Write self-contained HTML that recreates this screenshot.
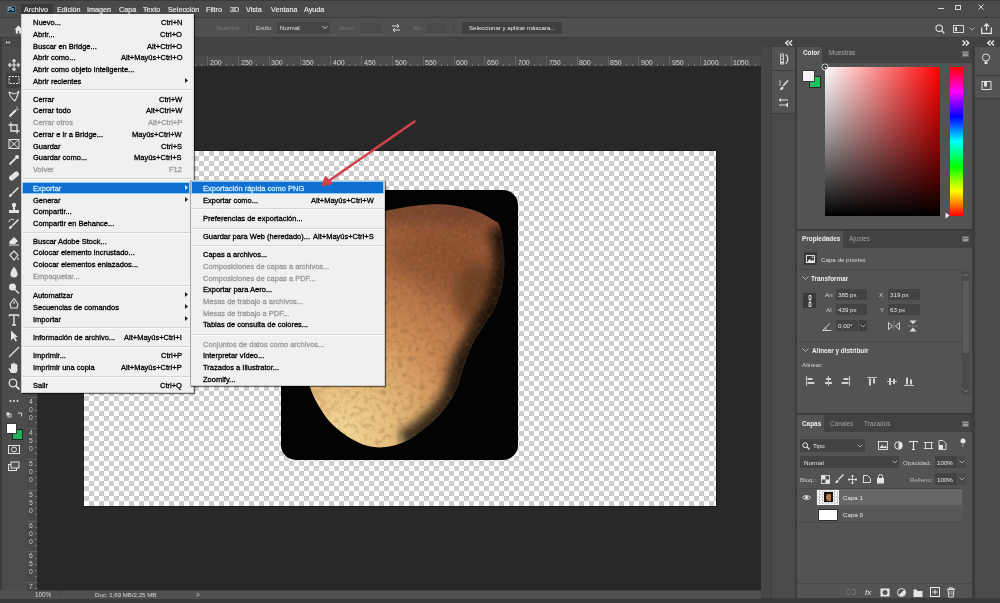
<!DOCTYPE html>
<html><head><meta charset="utf-8"><style>
html,body{margin:0;padding:0;}
body{width:1000px;height:603px;position:relative;overflow:hidden;background:#282828;font-family:"Liberation Sans", sans-serif;}
body>div,body>svg{position:absolute;}
.t{white-space:nowrap;will-change:transform;}
</style></head><body>
<div style="left:0px;top:0px;width:1000px;height:603px;background:#535353;"></div>
<div style="left:38px;top:67px;width:723px;height:523px;background:#282828;"></div>
<div style="left:0px;top:0px;width:1000px;height:1px;background:#3a3a3a;"></div>
<div style="left:0px;top:1px;width:1000px;height:16px;background:#4a4a4a;"></div>
<div style="left:0px;top:17px;width:1000px;height:1px;background:#3d3d3d;"></div>
<div style="left:0px;top:18px;width:1000px;height:19px;background:#4f4f4f;"></div>
<div style="left:0px;top:34px;width:1000px;height:1px;background:#565656;"></div>
<div style="left:0px;top:36.5px;width:1000px;height:1.5px;background:#3e3e3e;"></div>
<div style="left:0px;top:38px;width:761px;height:18px;background:#424242;"></div>
<div style="left:761px;top:38px;width:239px;height:9px;background:#424242;"></div>
<div style="left:7px;top:5.5px;width:8.5px;height:7.8px;background:#0a1d2c;border:0.6px solid #4a6a80;box-sizing:border-box;"></div>
<div class="t" style="left:8.3px;top:6.86px;font-size:5.6px;line-height:5.6px;color:#a8dcf8;font-weight:bold;letter-spacing:-0.4px;">Ps</div>
<div style="left:21px;top:4px;width:32px;height:11px;background:#3a3a3a;"></div>
<div class="t" style="left:24px;top:5.91px;font-size:7.2px;line-height:7.2px;color:#ececec;-webkit-text-stroke:0.15px #ececec;">Archivo</div>
<div class="t" style="left:56.5px;top:5.91px;font-size:7.2px;line-height:7.2px;color:#ececec;-webkit-text-stroke:0.15px #ececec;">Edición</div>
<div class="t" style="left:87px;top:5.91px;font-size:7.2px;line-height:7.2px;color:#ececec;-webkit-text-stroke:0.15px #ececec;">Imagen</div>
<div class="t" style="left:119px;top:5.91px;font-size:7.2px;line-height:7.2px;color:#ececec;-webkit-text-stroke:0.15px #ececec;">Capa</div>
<div class="t" style="left:143px;top:5.91px;font-size:7.2px;line-height:7.2px;color:#ececec;-webkit-text-stroke:0.15px #ececec;">Texto</div>
<div class="t" style="left:168px;top:5.91px;font-size:7.2px;line-height:7.2px;color:#ececec;-webkit-text-stroke:0.15px #ececec;">Selección</div>
<div class="t" style="left:206px;top:5.91px;font-size:7.2px;line-height:7.2px;color:#ececec;-webkit-text-stroke:0.15px #ececec;">Filtro</div>
<div class="t" style="left:229.5px;top:5.91px;font-size:7.2px;line-height:7.2px;color:#ececec;-webkit-text-stroke:0.15px #ececec;">3D</div>
<div class="t" style="left:246px;top:5.91px;font-size:7.2px;line-height:7.2px;color:#ececec;-webkit-text-stroke:0.15px #ececec;">Vista</div>
<div class="t" style="left:270.5px;top:5.91px;font-size:7.2px;line-height:7.2px;color:#ececec;-webkit-text-stroke:0.15px #ececec;">Ventana</div>
<div class="t" style="left:304px;top:5.91px;font-size:7.2px;line-height:7.2px;color:#ececec;-webkit-text-stroke:0.15px #ececec;">Ayuda</div>
<div style="left:937.5px;top:8px;width:6.5px;height:1px;background:#d8d8d8;"></div>
<div style="left:955px;top:4.5px;width:6px;height:5.5px;border:1px solid #d8d8d8;border-top-width:1.6px;box-sizing:border-box;"></div>
<svg style="left:978px;top:4px;width:6px;height:6px" viewBox="0 0 6 6"><path d="M0.5 0.5L5.5 5.5M5.5 0.5L0.5 5.5" stroke="#d8d8d8" stroke-width="1"/></svg>
<svg style="left:13.5px;top:24.5px;width:9px;height:9px" viewBox="0 0 10 10"><path d="M5 0.5L0.5 5H2v4.5h2.3V6.5h1.4v3H8V5h1.5z" fill="#e8e8e8"/></svg>
<div style="left:29px;top:21px;width:1px;height:13px;background:#3a3a3a;"></div>
<div class="t" style="left:216px;top:25.14px;font-size:6.1px;line-height:6.1px;color:#7a7a7a;">Suavizar</div>
<div style="left:248px;top:21px;width:1px;height:13px;background:#474747;"></div>
<div class="t" style="left:256px;top:25.14px;font-size:6.1px;line-height:6.1px;color:#cfcfcf;">Estilo:</div>
<div style="left:277px;top:22px;width:53px;height:12px;background:#454545;"></div>
<div class="t" style="left:280px;top:25.14px;font-size:6.1px;line-height:6.1px;color:#e6e6e6;">Normal</div>
<svg style="left:322px;top:25px;width:6px;height:5px" viewBox="0 0 6 5"><path d="M0.5 1L3 3.5L5.5 1" stroke="#cfcfcf" fill="none" stroke-width="1"/></svg>
<div class="t" style="left:339px;top:25.14px;font-size:6.1px;line-height:6.1px;color:#7a7a7a;">Anch.:</div>
<div style="left:360px;top:23px;width:21px;height:10px;background:#4a4a4a;"></div>
<svg style="left:391px;top:23px;width:10px;height:10px" viewBox="0 0 10 10"><path d="M1 3h7M6 1l2 2-2 2M9 7H2M4 5L2 7l2 2" stroke="#d8d8d8" fill="none" stroke-width="1"/></svg>
<div class="t" style="left:413px;top:25.14px;font-size:6.1px;line-height:6.1px;color:#7a7a7a;">Alt.:</div>
<div style="left:427px;top:23px;width:20px;height:10px;background:#4a4a4a;"></div>
<div style="left:453px;top:21px;width:1px;height:13px;background:#474747;"></div>
<div style="left:462px;top:22px;width:100px;height:12px;background:#3f3f3f;border-radius:1px;"></div>
<div class="t" style="left:469px;top:25.14px;font-size:6.1px;line-height:6.1px;color:#ebebeb;">Seleccionar y aplicar máscara...</div>
<svg style="left:935px;top:23.5px;width:10px;height:10px" viewBox="0 0 10 10"><circle cx="4.2" cy="4.2" r="3.2" stroke="#e0e0e0" fill="none" stroke-width="1.1"/><path d="M6.5 6.5L9.3 9.3" stroke="#e0e0e0" stroke-width="1.3"/></svg>
<div style="left:953px;top:25px;width:11px;height:8px;border:1px solid #d8d8d8;box-sizing:border-box;"></div>
<div style="left:955px;top:27px;width:2px;height:4px;background:#d8d8d8;"></div>
<svg style="left:969px;top:26.5px;width:6px;height:4px" viewBox="0 0 6 4"><path d="M0.5 0.5L3 3L5.5 0.5" stroke="#a8a8a8" fill="none"/></svg>
<svg style="left:981px;top:23px;width:11px;height:11px" viewBox="0 0 11 11"><path d="M0.7 4.5v5.8h9.6V4.5M5.5 7.5V1M3 3.3L5.5 0.8L8 3.3" stroke="#e8e8e8" fill="none" stroke-width="1.2"/></svg>
<div style="left:27px;top:56px;width:734px;height:11px;background:#4a4a4a;"></div>
<div style="left:27px;top:66px;width:734px;height:1px;background:#2e2e2e;"></div>
<div class="t" style="left:55.7px;top:59.07px;font-size:7.0px;line-height:7.0px;color:#d6d6d6;">-50</div>
<div class="t" style="left:86.5px;top:59.07px;font-size:7.0px;line-height:7.0px;color:#d6d6d6;">0</div>
<div class="t" style="left:117.3px;top:59.07px;font-size:7.0px;line-height:7.0px;color:#d6d6d6;">50</div>
<div class="t" style="left:148.1px;top:59.07px;font-size:7.0px;line-height:7.0px;color:#d6d6d6;">100</div>
<div class="t" style="left:178.9px;top:59.07px;font-size:7.0px;line-height:7.0px;color:#d6d6d6;">150</div>
<div class="t" style="left:209.7px;top:59.07px;font-size:7.0px;line-height:7.0px;color:#d6d6d6;">200</div>
<div class="t" style="left:240.5px;top:59.07px;font-size:7.0px;line-height:7.0px;color:#d6d6d6;">250</div>
<div class="t" style="left:271.3px;top:59.07px;font-size:7.0px;line-height:7.0px;color:#d6d6d6;">300</div>
<div class="t" style="left:302.1px;top:59.07px;font-size:7.0px;line-height:7.0px;color:#d6d6d6;">350</div>
<div class="t" style="left:332.9px;top:59.07px;font-size:7.0px;line-height:7.0px;color:#d6d6d6;">400</div>
<div class="t" style="left:363.7px;top:59.07px;font-size:7.0px;line-height:7.0px;color:#d6d6d6;">450</div>
<div class="t" style="left:394.5px;top:59.07px;font-size:7.0px;line-height:7.0px;color:#d6d6d6;">500</div>
<div class="t" style="left:425.3px;top:59.07px;font-size:7.0px;line-height:7.0px;color:#d6d6d6;">550</div>
<div class="t" style="left:456.1px;top:59.07px;font-size:7.0px;line-height:7.0px;color:#d6d6d6;">600</div>
<div class="t" style="left:486.9px;top:59.07px;font-size:7.0px;line-height:7.0px;color:#d6d6d6;">650</div>
<div class="t" style="left:517.7px;top:59.07px;font-size:7.0px;line-height:7.0px;color:#d6d6d6;">700</div>
<div class="t" style="left:548.5px;top:59.07px;font-size:7.0px;line-height:7.0px;color:#d6d6d6;">750</div>
<div class="t" style="left:579.3px;top:59.07px;font-size:7.0px;line-height:7.0px;color:#d6d6d6;">800</div>
<div class="t" style="left:610.1px;top:59.07px;font-size:7.0px;line-height:7.0px;color:#d6d6d6;">850</div>
<div class="t" style="left:640.9px;top:59.07px;font-size:7.0px;line-height:7.0px;color:#d6d6d6;">900</div>
<div class="t" style="left:671.7px;top:59.07px;font-size:7.0px;line-height:7.0px;color:#d6d6d6;">950</div>
<div class="t" style="left:702.5px;top:59.07px;font-size:7.0px;line-height:7.0px;color:#d6d6d6;">1000</div>
<div class="t" style="left:733.3px;top:59.07px;font-size:7.0px;line-height:7.0px;color:#d6d6d6;">1050</div>
<div style="left:53.20px;top:56px;width:1px;height:10px;background:#626262"></div>
<div style="left:59.36px;top:64px;width:1px;height:2px;background:#7a7a7a"></div>
<div style="left:65.52px;top:64px;width:1px;height:2px;background:#7a7a7a"></div>
<div style="left:71.68px;top:64px;width:1px;height:2px;background:#7a7a7a"></div>
<div style="left:77.84px;top:64px;width:1px;height:2px;background:#7a7a7a"></div>
<div style="left:84.00px;top:56px;width:1px;height:10px;background:#626262"></div>
<div style="left:90.16px;top:64px;width:1px;height:2px;background:#7a7a7a"></div>
<div style="left:96.32px;top:64px;width:1px;height:2px;background:#7a7a7a"></div>
<div style="left:102.48px;top:64px;width:1px;height:2px;background:#7a7a7a"></div>
<div style="left:108.64px;top:64px;width:1px;height:2px;background:#7a7a7a"></div>
<div style="left:114.80px;top:56px;width:1px;height:10px;background:#626262"></div>
<div style="left:120.96px;top:64px;width:1px;height:2px;background:#7a7a7a"></div>
<div style="left:127.12px;top:64px;width:1px;height:2px;background:#7a7a7a"></div>
<div style="left:133.28px;top:64px;width:1px;height:2px;background:#7a7a7a"></div>
<div style="left:139.44px;top:64px;width:1px;height:2px;background:#7a7a7a"></div>
<div style="left:145.60px;top:56px;width:1px;height:10px;background:#626262"></div>
<div style="left:151.76px;top:64px;width:1px;height:2px;background:#7a7a7a"></div>
<div style="left:157.92px;top:64px;width:1px;height:2px;background:#7a7a7a"></div>
<div style="left:164.08px;top:64px;width:1px;height:2px;background:#7a7a7a"></div>
<div style="left:170.24px;top:64px;width:1px;height:2px;background:#7a7a7a"></div>
<div style="left:176.40px;top:56px;width:1px;height:10px;background:#626262"></div>
<div style="left:182.56px;top:64px;width:1px;height:2px;background:#7a7a7a"></div>
<div style="left:188.72px;top:64px;width:1px;height:2px;background:#7a7a7a"></div>
<div style="left:194.88px;top:64px;width:1px;height:2px;background:#7a7a7a"></div>
<div style="left:201.04px;top:64px;width:1px;height:2px;background:#7a7a7a"></div>
<div style="left:207.20px;top:56px;width:1px;height:10px;background:#626262"></div>
<div style="left:213.36px;top:64px;width:1px;height:2px;background:#7a7a7a"></div>
<div style="left:219.52px;top:64px;width:1px;height:2px;background:#7a7a7a"></div>
<div style="left:225.68px;top:64px;width:1px;height:2px;background:#7a7a7a"></div>
<div style="left:231.84px;top:64px;width:1px;height:2px;background:#7a7a7a"></div>
<div style="left:238.00px;top:56px;width:1px;height:10px;background:#626262"></div>
<div style="left:244.16px;top:64px;width:1px;height:2px;background:#7a7a7a"></div>
<div style="left:250.32px;top:64px;width:1px;height:2px;background:#7a7a7a"></div>
<div style="left:256.48px;top:64px;width:1px;height:2px;background:#7a7a7a"></div>
<div style="left:262.64px;top:64px;width:1px;height:2px;background:#7a7a7a"></div>
<div style="left:268.80px;top:56px;width:1px;height:10px;background:#626262"></div>
<div style="left:274.96px;top:64px;width:1px;height:2px;background:#7a7a7a"></div>
<div style="left:281.12px;top:64px;width:1px;height:2px;background:#7a7a7a"></div>
<div style="left:287.28px;top:64px;width:1px;height:2px;background:#7a7a7a"></div>
<div style="left:293.44px;top:64px;width:1px;height:2px;background:#7a7a7a"></div>
<div style="left:299.60px;top:56px;width:1px;height:10px;background:#626262"></div>
<div style="left:305.76px;top:64px;width:1px;height:2px;background:#7a7a7a"></div>
<div style="left:311.92px;top:64px;width:1px;height:2px;background:#7a7a7a"></div>
<div style="left:318.08px;top:64px;width:1px;height:2px;background:#7a7a7a"></div>
<div style="left:324.24px;top:64px;width:1px;height:2px;background:#7a7a7a"></div>
<div style="left:330.40px;top:56px;width:1px;height:10px;background:#626262"></div>
<div style="left:336.56px;top:64px;width:1px;height:2px;background:#7a7a7a"></div>
<div style="left:342.72px;top:64px;width:1px;height:2px;background:#7a7a7a"></div>
<div style="left:348.88px;top:64px;width:1px;height:2px;background:#7a7a7a"></div>
<div style="left:355.04px;top:64px;width:1px;height:2px;background:#7a7a7a"></div>
<div style="left:361.20px;top:56px;width:1px;height:10px;background:#626262"></div>
<div style="left:367.36px;top:64px;width:1px;height:2px;background:#7a7a7a"></div>
<div style="left:373.52px;top:64px;width:1px;height:2px;background:#7a7a7a"></div>
<div style="left:379.68px;top:64px;width:1px;height:2px;background:#7a7a7a"></div>
<div style="left:385.84px;top:64px;width:1px;height:2px;background:#7a7a7a"></div>
<div style="left:392.00px;top:56px;width:1px;height:10px;background:#626262"></div>
<div style="left:398.16px;top:64px;width:1px;height:2px;background:#7a7a7a"></div>
<div style="left:404.32px;top:64px;width:1px;height:2px;background:#7a7a7a"></div>
<div style="left:410.48px;top:64px;width:1px;height:2px;background:#7a7a7a"></div>
<div style="left:416.64px;top:64px;width:1px;height:2px;background:#7a7a7a"></div>
<div style="left:422.80px;top:56px;width:1px;height:10px;background:#626262"></div>
<div style="left:428.96px;top:64px;width:1px;height:2px;background:#7a7a7a"></div>
<div style="left:435.12px;top:64px;width:1px;height:2px;background:#7a7a7a"></div>
<div style="left:441.28px;top:64px;width:1px;height:2px;background:#7a7a7a"></div>
<div style="left:447.44px;top:64px;width:1px;height:2px;background:#7a7a7a"></div>
<div style="left:453.60px;top:56px;width:1px;height:10px;background:#626262"></div>
<div style="left:459.76px;top:64px;width:1px;height:2px;background:#7a7a7a"></div>
<div style="left:465.92px;top:64px;width:1px;height:2px;background:#7a7a7a"></div>
<div style="left:472.08px;top:64px;width:1px;height:2px;background:#7a7a7a"></div>
<div style="left:478.24px;top:64px;width:1px;height:2px;background:#7a7a7a"></div>
<div style="left:484.40px;top:56px;width:1px;height:10px;background:#626262"></div>
<div style="left:490.56px;top:64px;width:1px;height:2px;background:#7a7a7a"></div>
<div style="left:496.72px;top:64px;width:1px;height:2px;background:#7a7a7a"></div>
<div style="left:502.88px;top:64px;width:1px;height:2px;background:#7a7a7a"></div>
<div style="left:509.04px;top:64px;width:1px;height:2px;background:#7a7a7a"></div>
<div style="left:515.20px;top:56px;width:1px;height:10px;background:#626262"></div>
<div style="left:521.36px;top:64px;width:1px;height:2px;background:#7a7a7a"></div>
<div style="left:527.52px;top:64px;width:1px;height:2px;background:#7a7a7a"></div>
<div style="left:533.68px;top:64px;width:1px;height:2px;background:#7a7a7a"></div>
<div style="left:539.84px;top:64px;width:1px;height:2px;background:#7a7a7a"></div>
<div style="left:546.00px;top:56px;width:1px;height:10px;background:#626262"></div>
<div style="left:552.16px;top:64px;width:1px;height:2px;background:#7a7a7a"></div>
<div style="left:558.32px;top:64px;width:1px;height:2px;background:#7a7a7a"></div>
<div style="left:564.48px;top:64px;width:1px;height:2px;background:#7a7a7a"></div>
<div style="left:570.64px;top:64px;width:1px;height:2px;background:#7a7a7a"></div>
<div style="left:576.80px;top:56px;width:1px;height:10px;background:#626262"></div>
<div style="left:582.96px;top:64px;width:1px;height:2px;background:#7a7a7a"></div>
<div style="left:589.12px;top:64px;width:1px;height:2px;background:#7a7a7a"></div>
<div style="left:595.28px;top:64px;width:1px;height:2px;background:#7a7a7a"></div>
<div style="left:601.44px;top:64px;width:1px;height:2px;background:#7a7a7a"></div>
<div style="left:607.60px;top:56px;width:1px;height:10px;background:#626262"></div>
<div style="left:613.76px;top:64px;width:1px;height:2px;background:#7a7a7a"></div>
<div style="left:619.92px;top:64px;width:1px;height:2px;background:#7a7a7a"></div>
<div style="left:626.08px;top:64px;width:1px;height:2px;background:#7a7a7a"></div>
<div style="left:632.24px;top:64px;width:1px;height:2px;background:#7a7a7a"></div>
<div style="left:638.40px;top:56px;width:1px;height:10px;background:#626262"></div>
<div style="left:644.56px;top:64px;width:1px;height:2px;background:#7a7a7a"></div>
<div style="left:650.72px;top:64px;width:1px;height:2px;background:#7a7a7a"></div>
<div style="left:656.88px;top:64px;width:1px;height:2px;background:#7a7a7a"></div>
<div style="left:663.04px;top:64px;width:1px;height:2px;background:#7a7a7a"></div>
<div style="left:669.20px;top:56px;width:1px;height:10px;background:#626262"></div>
<div style="left:675.36px;top:64px;width:1px;height:2px;background:#7a7a7a"></div>
<div style="left:681.52px;top:64px;width:1px;height:2px;background:#7a7a7a"></div>
<div style="left:687.68px;top:64px;width:1px;height:2px;background:#7a7a7a"></div>
<div style="left:693.84px;top:64px;width:1px;height:2px;background:#7a7a7a"></div>
<div style="left:700.00px;top:56px;width:1px;height:10px;background:#626262"></div>
<div style="left:706.16px;top:64px;width:1px;height:2px;background:#7a7a7a"></div>
<div style="left:712.32px;top:64px;width:1px;height:2px;background:#7a7a7a"></div>
<div style="left:718.48px;top:64px;width:1px;height:2px;background:#7a7a7a"></div>
<div style="left:724.64px;top:64px;width:1px;height:2px;background:#7a7a7a"></div>
<div style="left:730.80px;top:56px;width:1px;height:10px;background:#626262"></div>
<div style="left:736.96px;top:64px;width:1px;height:2px;background:#7a7a7a"></div>
<div style="left:743.12px;top:64px;width:1px;height:2px;background:#7a7a7a"></div>
<div style="left:749.28px;top:64px;width:1px;height:2px;background:#7a7a7a"></div>
<div style="left:755.44px;top:64px;width:1px;height:2px;background:#7a7a7a"></div>
<div style="left:27px;top:67px;width:11px;height:523px;background:#484848;"></div>
<div style="left:37px;top:67px;width:1px;height:523px;background:#2e2e2e;"></div>
<div style="left:35px;top:70.92px;width:2px;height:1px;background:#7a7a7a"></div>
<div style="left:35px;top:77.08px;width:2px;height:1px;background:#7a7a7a"></div>
<div style="left:35px;top:83.24px;width:2px;height:1px;background:#7a7a7a"></div>
<div style="left:27px;top:89.40px;width:10px;height:1px;background:#626262"></div>
<div class="t" style="left:27.7px;top:91.40px;width:6px;font-size:6.8px;line-height:6.6px;color:#cccccc;text-align:center">-</div>
<div class="t" style="left:27.7px;top:99.40px;width:6px;font-size:6.8px;line-height:6.6px;color:#cccccc;text-align:center">1</div>
<div class="t" style="left:27.7px;top:107.40px;width:6px;font-size:6.8px;line-height:6.6px;color:#cccccc;text-align:center">0</div>
<div class="t" style="left:27.7px;top:115.40px;width:6px;font-size:6.8px;line-height:6.6px;color:#cccccc;text-align:center">0</div>
<div style="left:35px;top:95.56px;width:2px;height:1px;background:#7a7a7a"></div>
<div style="left:35px;top:101.72px;width:2px;height:1px;background:#7a7a7a"></div>
<div style="left:35px;top:107.88px;width:2px;height:1px;background:#7a7a7a"></div>
<div style="left:35px;top:114.04px;width:2px;height:1px;background:#7a7a7a"></div>
<div style="left:27px;top:120.20px;width:10px;height:1px;background:#626262"></div>
<div class="t" style="left:27.7px;top:122.20px;width:6px;font-size:6.8px;line-height:6.6px;color:#cccccc;text-align:center">-</div>
<div class="t" style="left:27.7px;top:130.20px;width:6px;font-size:6.8px;line-height:6.6px;color:#cccccc;text-align:center">5</div>
<div class="t" style="left:27.7px;top:138.20px;width:6px;font-size:6.8px;line-height:6.6px;color:#cccccc;text-align:center">0</div>
<div style="left:35px;top:126.36px;width:2px;height:1px;background:#7a7a7a"></div>
<div style="left:35px;top:132.52px;width:2px;height:1px;background:#7a7a7a"></div>
<div style="left:35px;top:138.68px;width:2px;height:1px;background:#7a7a7a"></div>
<div style="left:35px;top:144.84px;width:2px;height:1px;background:#7a7a7a"></div>
<div style="left:27px;top:151.00px;width:10px;height:1px;background:#626262"></div>
<div class="t" style="left:27.7px;top:153.00px;width:6px;font-size:6.8px;line-height:6.6px;color:#cccccc;text-align:center">0</div>
<div style="left:35px;top:157.16px;width:2px;height:1px;background:#7a7a7a"></div>
<div style="left:35px;top:163.32px;width:2px;height:1px;background:#7a7a7a"></div>
<div style="left:35px;top:169.48px;width:2px;height:1px;background:#7a7a7a"></div>
<div style="left:35px;top:175.64px;width:2px;height:1px;background:#7a7a7a"></div>
<div style="left:27px;top:181.80px;width:10px;height:1px;background:#626262"></div>
<div class="t" style="left:27.7px;top:183.80px;width:6px;font-size:6.8px;line-height:6.6px;color:#cccccc;text-align:center">5</div>
<div class="t" style="left:27.7px;top:191.80px;width:6px;font-size:6.8px;line-height:6.6px;color:#cccccc;text-align:center">0</div>
<div style="left:35px;top:187.96px;width:2px;height:1px;background:#7a7a7a"></div>
<div style="left:35px;top:194.12px;width:2px;height:1px;background:#7a7a7a"></div>
<div style="left:35px;top:200.28px;width:2px;height:1px;background:#7a7a7a"></div>
<div style="left:35px;top:206.44px;width:2px;height:1px;background:#7a7a7a"></div>
<div style="left:27px;top:212.60px;width:10px;height:1px;background:#626262"></div>
<div class="t" style="left:27.7px;top:214.60px;width:6px;font-size:6.8px;line-height:6.6px;color:#cccccc;text-align:center">1</div>
<div class="t" style="left:27.7px;top:222.60px;width:6px;font-size:6.8px;line-height:6.6px;color:#cccccc;text-align:center">0</div>
<div class="t" style="left:27.7px;top:230.60px;width:6px;font-size:6.8px;line-height:6.6px;color:#cccccc;text-align:center">0</div>
<div style="left:35px;top:218.76px;width:2px;height:1px;background:#7a7a7a"></div>
<div style="left:35px;top:224.92px;width:2px;height:1px;background:#7a7a7a"></div>
<div style="left:35px;top:231.08px;width:2px;height:1px;background:#7a7a7a"></div>
<div style="left:35px;top:237.24px;width:2px;height:1px;background:#7a7a7a"></div>
<div style="left:27px;top:243.40px;width:10px;height:1px;background:#626262"></div>
<div class="t" style="left:27.7px;top:245.40px;width:6px;font-size:6.8px;line-height:6.6px;color:#cccccc;text-align:center">1</div>
<div class="t" style="left:27.7px;top:253.40px;width:6px;font-size:6.8px;line-height:6.6px;color:#cccccc;text-align:center">5</div>
<div class="t" style="left:27.7px;top:261.40px;width:6px;font-size:6.8px;line-height:6.6px;color:#cccccc;text-align:center">0</div>
<div style="left:35px;top:249.56px;width:2px;height:1px;background:#7a7a7a"></div>
<div style="left:35px;top:255.72px;width:2px;height:1px;background:#7a7a7a"></div>
<div style="left:35px;top:261.88px;width:2px;height:1px;background:#7a7a7a"></div>
<div style="left:35px;top:268.04px;width:2px;height:1px;background:#7a7a7a"></div>
<div style="left:27px;top:274.20px;width:10px;height:1px;background:#626262"></div>
<div class="t" style="left:27.7px;top:276.20px;width:6px;font-size:6.8px;line-height:6.6px;color:#cccccc;text-align:center">2</div>
<div class="t" style="left:27.7px;top:284.20px;width:6px;font-size:6.8px;line-height:6.6px;color:#cccccc;text-align:center">0</div>
<div class="t" style="left:27.7px;top:292.20px;width:6px;font-size:6.8px;line-height:6.6px;color:#cccccc;text-align:center">0</div>
<div style="left:35px;top:280.36px;width:2px;height:1px;background:#7a7a7a"></div>
<div style="left:35px;top:286.52px;width:2px;height:1px;background:#7a7a7a"></div>
<div style="left:35px;top:292.68px;width:2px;height:1px;background:#7a7a7a"></div>
<div style="left:35px;top:298.84px;width:2px;height:1px;background:#7a7a7a"></div>
<div style="left:27px;top:305.00px;width:10px;height:1px;background:#626262"></div>
<div class="t" style="left:27.7px;top:307.00px;width:6px;font-size:6.8px;line-height:6.6px;color:#cccccc;text-align:center">2</div>
<div class="t" style="left:27.7px;top:315.00px;width:6px;font-size:6.8px;line-height:6.6px;color:#cccccc;text-align:center">5</div>
<div class="t" style="left:27.7px;top:323.00px;width:6px;font-size:6.8px;line-height:6.6px;color:#cccccc;text-align:center">0</div>
<div style="left:35px;top:311.16px;width:2px;height:1px;background:#7a7a7a"></div>
<div style="left:35px;top:317.32px;width:2px;height:1px;background:#7a7a7a"></div>
<div style="left:35px;top:323.48px;width:2px;height:1px;background:#7a7a7a"></div>
<div style="left:35px;top:329.64px;width:2px;height:1px;background:#7a7a7a"></div>
<div style="left:27px;top:335.80px;width:10px;height:1px;background:#626262"></div>
<div class="t" style="left:27.7px;top:337.80px;width:6px;font-size:6.8px;line-height:6.6px;color:#cccccc;text-align:center">3</div>
<div class="t" style="left:27.7px;top:345.80px;width:6px;font-size:6.8px;line-height:6.6px;color:#cccccc;text-align:center">0</div>
<div class="t" style="left:27.7px;top:353.80px;width:6px;font-size:6.8px;line-height:6.6px;color:#cccccc;text-align:center">0</div>
<div style="left:35px;top:341.96px;width:2px;height:1px;background:#7a7a7a"></div>
<div style="left:35px;top:348.12px;width:2px;height:1px;background:#7a7a7a"></div>
<div style="left:35px;top:354.28px;width:2px;height:1px;background:#7a7a7a"></div>
<div style="left:35px;top:360.44px;width:2px;height:1px;background:#7a7a7a"></div>
<div style="left:27px;top:366.60px;width:10px;height:1px;background:#626262"></div>
<div class="t" style="left:27.7px;top:368.60px;width:6px;font-size:6.8px;line-height:6.6px;color:#cccccc;text-align:center">3</div>
<div class="t" style="left:27.7px;top:376.60px;width:6px;font-size:6.8px;line-height:6.6px;color:#cccccc;text-align:center">5</div>
<div class="t" style="left:27.7px;top:384.60px;width:6px;font-size:6.8px;line-height:6.6px;color:#cccccc;text-align:center">0</div>
<div style="left:35px;top:372.76px;width:2px;height:1px;background:#7a7a7a"></div>
<div style="left:35px;top:378.92px;width:2px;height:1px;background:#7a7a7a"></div>
<div style="left:35px;top:385.08px;width:2px;height:1px;background:#7a7a7a"></div>
<div style="left:35px;top:391.24px;width:2px;height:1px;background:#7a7a7a"></div>
<div style="left:27px;top:397.40px;width:10px;height:1px;background:#626262"></div>
<div class="t" style="left:27.7px;top:399.40px;width:6px;font-size:6.8px;line-height:6.6px;color:#cccccc;text-align:center">4</div>
<div class="t" style="left:27.7px;top:407.40px;width:6px;font-size:6.8px;line-height:6.6px;color:#cccccc;text-align:center">0</div>
<div class="t" style="left:27.7px;top:415.40px;width:6px;font-size:6.8px;line-height:6.6px;color:#cccccc;text-align:center">0</div>
<div style="left:35px;top:403.56px;width:2px;height:1px;background:#7a7a7a"></div>
<div style="left:35px;top:409.72px;width:2px;height:1px;background:#7a7a7a"></div>
<div style="left:35px;top:415.88px;width:2px;height:1px;background:#7a7a7a"></div>
<div style="left:35px;top:422.04px;width:2px;height:1px;background:#7a7a7a"></div>
<div style="left:27px;top:428.20px;width:10px;height:1px;background:#626262"></div>
<div class="t" style="left:27.7px;top:430.20px;width:6px;font-size:6.8px;line-height:6.6px;color:#cccccc;text-align:center">4</div>
<div class="t" style="left:27.7px;top:438.20px;width:6px;font-size:6.8px;line-height:6.6px;color:#cccccc;text-align:center">5</div>
<div class="t" style="left:27.7px;top:446.20px;width:6px;font-size:6.8px;line-height:6.6px;color:#cccccc;text-align:center">0</div>
<div style="left:35px;top:434.36px;width:2px;height:1px;background:#7a7a7a"></div>
<div style="left:35px;top:440.52px;width:2px;height:1px;background:#7a7a7a"></div>
<div style="left:35px;top:446.68px;width:2px;height:1px;background:#7a7a7a"></div>
<div style="left:35px;top:452.84px;width:2px;height:1px;background:#7a7a7a"></div>
<div style="left:27px;top:459.00px;width:10px;height:1px;background:#626262"></div>
<div class="t" style="left:27.7px;top:461.00px;width:6px;font-size:6.8px;line-height:6.6px;color:#cccccc;text-align:center">5</div>
<div class="t" style="left:27.7px;top:469.00px;width:6px;font-size:6.8px;line-height:6.6px;color:#cccccc;text-align:center">0</div>
<div class="t" style="left:27.7px;top:477.00px;width:6px;font-size:6.8px;line-height:6.6px;color:#cccccc;text-align:center">0</div>
<div style="left:35px;top:465.16px;width:2px;height:1px;background:#7a7a7a"></div>
<div style="left:35px;top:471.32px;width:2px;height:1px;background:#7a7a7a"></div>
<div style="left:35px;top:477.48px;width:2px;height:1px;background:#7a7a7a"></div>
<div style="left:35px;top:483.64px;width:2px;height:1px;background:#7a7a7a"></div>
<div style="left:27px;top:489.80px;width:10px;height:1px;background:#626262"></div>
<div class="t" style="left:27.7px;top:491.80px;width:6px;font-size:6.8px;line-height:6.6px;color:#cccccc;text-align:center">5</div>
<div class="t" style="left:27.7px;top:499.80px;width:6px;font-size:6.8px;line-height:6.6px;color:#cccccc;text-align:center">5</div>
<div class="t" style="left:27.7px;top:507.80px;width:6px;font-size:6.8px;line-height:6.6px;color:#cccccc;text-align:center">0</div>
<div style="left:35px;top:495.96px;width:2px;height:1px;background:#7a7a7a"></div>
<div style="left:35px;top:502.12px;width:2px;height:1px;background:#7a7a7a"></div>
<div style="left:35px;top:508.28px;width:2px;height:1px;background:#7a7a7a"></div>
<div style="left:35px;top:514.44px;width:2px;height:1px;background:#7a7a7a"></div>
<div style="left:27px;top:520.60px;width:10px;height:1px;background:#626262"></div>
<div class="t" style="left:27.7px;top:522.60px;width:6px;font-size:6.8px;line-height:6.6px;color:#cccccc;text-align:center">6</div>
<div class="t" style="left:27.7px;top:530.60px;width:6px;font-size:6.8px;line-height:6.6px;color:#cccccc;text-align:center">0</div>
<div class="t" style="left:27.7px;top:538.60px;width:6px;font-size:6.8px;line-height:6.6px;color:#cccccc;text-align:center">0</div>
<div style="left:35px;top:526.76px;width:2px;height:1px;background:#7a7a7a"></div>
<div style="left:35px;top:532.92px;width:2px;height:1px;background:#7a7a7a"></div>
<div style="left:35px;top:539.08px;width:2px;height:1px;background:#7a7a7a"></div>
<div style="left:35px;top:545.24px;width:2px;height:1px;background:#7a7a7a"></div>
<div style="left:27px;top:551.40px;width:10px;height:1px;background:#626262"></div>
<div class="t" style="left:27.7px;top:553.40px;width:6px;font-size:6.8px;line-height:6.6px;color:#cccccc;text-align:center">6</div>
<div class="t" style="left:27.7px;top:561.40px;width:6px;font-size:6.8px;line-height:6.6px;color:#cccccc;text-align:center">5</div>
<div class="t" style="left:27.7px;top:569.40px;width:6px;font-size:6.8px;line-height:6.6px;color:#cccccc;text-align:center">0</div>
<div style="left:35px;top:557.56px;width:2px;height:1px;background:#7a7a7a"></div>
<div style="left:35px;top:563.72px;width:2px;height:1px;background:#7a7a7a"></div>
<div style="left:35px;top:569.88px;width:2px;height:1px;background:#7a7a7a"></div>
<div style="left:35px;top:576.04px;width:2px;height:1px;background:#7a7a7a"></div>
<div style="left:27px;top:582.20px;width:10px;height:1px;background:#626262"></div>
<div class="t" style="left:27.7px;top:584.20px;width:6px;font-size:6.8px;line-height:6.6px;color:#cccccc;text-align:center">7</div>
<div style="left:35px;top:588.36px;width:2px;height:1px;background:#7a7a7a"></div>
<div style="left:0px;top:38px;width:27px;height:552px;background:#4c4c4c;"></div>
<div style="left:0px;top:38px;width:2px;height:565px;background:#3a3a3a;"></div>
<div style="left:2px;top:38px;width:25px;height:9px;background:#474747;"></div>
<svg style="left:6px;top:41px;width:5px;height:3px" viewBox="0 0 5 3"><path d="M0 0L2 1.5L0 3ZM2.6 0L4.6 1.5L2.6 3Z" fill="#d8d8d8"/></svg>
<div style="left:6px;top:73px;width:16px;height:15px;background:#3e3e3e;"></div>
<svg style="left:8.0px;top:58.5px;width:12px;height:12px" viewBox="0 0 12 12"><path d="M6 0.5v11M0.5 6h11M6 0.5L4.3 2.3M6 0.5l1.7 1.8M6 11.5L4.3 9.7M6 11.5l1.7-1.8M0.5 6l1.8-1.7M0.5 6l1.8 1.7M11.5 6L9.7 4.3M11.5 6L9.7 7.7" stroke="#e4e4e4" stroke-width="1.2" fill="none"/></svg>
<svg style="left:8.0px;top:74.0px;width:12px;height:12px" viewBox="0 0 12 12"><rect x="1" y="2.5" width="10" height="7" stroke="#e4e4e4" stroke-width="1" stroke-dasharray="2 1" fill="none"/></svg>
<svg style="left:8.0px;top:90.0px;width:12px;height:12px" viewBox="0 0 12 12"><path d="M1 2c3 1 6 4 10-1M1 2c1 5 3 7 6 9M11 1c-1 3-2 6-4 10" stroke="#e4e4e4" stroke-width="1.1" fill="none"/></svg>
<svg style="left:8.0px;top:106.0px;width:12px;height:12px" viewBox="0 0 12 12"><path d="M1.5 10.5L8 4" stroke="#e4e4e4" stroke-width="2.2"/><path d="M9 0.5v2M10.5 3.5h-2" stroke="#e4e4e4" stroke-width="0.8"/></svg>
<svg style="left:8.0px;top:122.0px;width:12px;height:12px" viewBox="0 0 12 12"><path d="M3 0.5v8.5h8.5M0.5 3h8.5v8.5" stroke="#e4e4e4" stroke-width="1.3" fill="none"/></svg>
<svg style="left:8.0px;top:138.0px;width:12px;height:12px" viewBox="0 0 12 12"><rect x="1" y="1.5" width="10" height="9" stroke="#e4e4e4" stroke-width="1" fill="none"/><path d="M1 1.5l10 9M11 1.5l-10 9" stroke="#e4e4e4" stroke-width="0.9"/></svg>
<svg style="left:8.0px;top:154.0px;width:12px;height:12px" viewBox="0 0 12 12"><path d="M1.5 10.5L7.5 4.5" stroke="#e4e4e4" stroke-width="1.8"/><circle cx="9" cy="3" r="2" fill="#e4e4e4"/></svg>
<svg style="left:8.0px;top:170.0px;width:12px;height:12px" viewBox="0 0 12 12"><rect x="0.5" y="3.5" width="11" height="5" rx="2" transform="rotate(-40 6 6)" fill="#e4e4e4"/></svg>
<svg style="left:8.0px;top:186.0px;width:12px;height:12px" viewBox="0 0 12 12"><path d="M10.5 1.5L4.5 7.5" stroke="#e4e4e4" stroke-width="1.6"/><path d="M1 11c0-2 1-3.5 3-3.5l0.5 0.5C4.5 10 3 11 1 11z" fill="#e4e4e4"/></svg>
<svg style="left:8.0px;top:202.0px;width:12px;height:12px" viewBox="0 0 12 12"><circle cx="6" cy="3" r="2.2" fill="#e4e4e4"/><rect x="5" y="4" width="2" height="4" fill="#e4e4e4"/><rect x="1" y="8" width="10" height="3" fill="#e4e4e4"/></svg>
<svg style="left:8.0px;top:218.0px;width:12px;height:12px" viewBox="0 0 12 12"><path d="M10.5 1.5L4.5 7.5" stroke="#e4e4e4" stroke-width="1.6"/><path d="M1 11c0-2 1-3.5 3-3.5l0.5 0.5C4.5 10 3 11 1 11z" fill="#e4e4e4"/><path d="M1 4a3 3 0 0 1 5-2" stroke="#e4e4e4" fill="none"/></svg>
<svg style="left:8.0px;top:234.0px;width:12px;height:12px" viewBox="0 0 12 12"><path d="M1 8l5-5 4 4-3 3H2z" fill="#e4e4e4"/><path d="M1 11h10" stroke="#e4e4e4"/></svg>
<svg style="left:8.0px;top:250.0px;width:12px;height:12px" viewBox="0 0 12 12"><path d="M2 5l4-4 4 4-4 5z" stroke="#e4e4e4" stroke-width="1.2" fill="none"/><path d="M10 7c1 2 1 3 0 3s-1-1 0-3z" fill="#e4e4e4"/></svg>
<svg style="left:8.0px;top:266.0px;width:12px;height:12px" viewBox="0 0 12 12"><path d="M6 0.5C3 5 2.5 6.5 2.5 8a3.5 3.5 0 0 0 7 0c0-1.5-0.5-3-3.5-7.5z" fill="#e4e4e4"/></svg>
<svg style="left:8.0px;top:282.0px;width:12px;height:12px" viewBox="0 0 12 12"><circle cx="4.5" cy="5" r="3.5" fill="#e4e4e4"/><path d="M7 7.5l4 4" stroke="#e4e4e4" stroke-width="1.5"/></svg>
<svg style="left:8.0px;top:298.0px;width:12px;height:12px" viewBox="0 0 12 12"><path d="M6 0.5L2 6l1 4h6l1-4z" stroke="#e4e4e4" stroke-width="1.1" fill="none"/><path d="M6 3v3" stroke="#e4e4e4"/></svg>
<svg style="left:8.0px;top:314.0px;width:12px;height:12px" viewBox="0 0 12 12"><path d="M1.5 2.5V1h9v1.5M6 1v10M4 11h4" stroke="#e4e4e4" stroke-width="1.4" fill="none"/></svg>
<svg style="left:8.0px;top:330.0px;width:12px;height:12px" viewBox="0 0 12 12"><path d="M3 0.5v10l2.5-2.5 2 3.5 1.5-0.8-2-3.4H10z" fill="#e4e4e4"/></svg>
<svg style="left:8.0px;top:346.0px;width:12px;height:12px" viewBox="0 0 12 12"><path d="M1 11L11 1" stroke="#e4e4e4" stroke-width="1.3"/></svg>
<svg style="left:8.0px;top:362.0px;width:12px;height:12px" viewBox="0 0 12 12"><path d="M3 11c-1-2-2-3-2.5-4.5 1-0.5 1.5 0 2.5 1V2.5a0.8 0.8 0 0 1 1.6 0V6V1.5a0.8 0.8 0 0 1 1.6 0V6V2a0.8 0.8 0 0 1 1.6 0v4V3a0.8 0.8 0 0 1 1.6 0v5c0 2-1 3-2 3z" fill="#e4e4e4"/></svg>
<svg style="left:8.0px;top:378.0px;width:12px;height:12px" viewBox="0 0 12 12"><circle cx="5" cy="5" r="3.8" stroke="#e4e4e4" stroke-width="1.3" fill="none"/><path d="M7.8 7.8L11.5 11.5" stroke="#e4e4e4" stroke-width="1.8"/></svg>
<svg style="left:8.0px;top:395.0px;width:12px;height:12px" viewBox="0 0 12 12"><circle cx="2.5" cy="6" r="1" fill="#e4e4e4"/><circle cx="6" cy="6" r="1" fill="#e4e4e4"/><circle cx="9.5" cy="6" r="1" fill="#e4e4e4"/></svg>
<svg style="left:6.0px;top:412.0px;width:6px;height:6px" viewBox="0 0 6 6"><rect x="0.5" y="0.5" width="3" height="3" fill="#e4e4e4"/><rect x="2" y="2" width="3" height="3" stroke="#e4e4e4" fill="none" stroke-width="0.8"/></svg>
<svg style="left:17.0px;top:412.0px;width:6px;height:6px" viewBox="0 0 6 6"><path d="M1 1h3.5v3.5" stroke="#e4e4e4" fill="none" stroke-width="0.9"/></svg>
<div style="left:12px;top:429px;width:11px;height:11px;background:#22b255;border:1px solid #1e1e1e;box-sizing:border-box;"></div>
<div style="left:6px;top:423px;width:11px;height:11px;background:#ffffff;border:1px solid #3a3a3a;box-sizing:border-box;"></div>
<svg style="left:8.0px;top:444.0px;width:12px;height:12px" viewBox="0 0 12 12"><rect x="0.5" y="1.5" width="11" height="8" stroke="#e4e4e4" fill="none"/><circle cx="6" cy="5.5" r="2.5" stroke="#e4e4e4" fill="none"/></svg>
<svg style="left:8.0px;top:461.0px;width:12px;height:12px" viewBox="0 0 12 12"><rect x="0.5" y="3.5" width="8" height="6" stroke="#e4e4e4" fill="none"/><rect x="3" y="1" width="8" height="6" stroke="#e4e4e4" fill="#535353"/></svg>
<div style="left:0px;top:590px;width:761px;height:13px;background:#505050;"></div>
<div style="left:27px;top:590px;width:734px;height:1px;background:#3c3c3c;"></div>
<div class="t" style="left:35px;top:591.67px;font-size:6.3px;line-height:6.3px;color:#d8d8d8;">100%</div>
<div style="left:60px;top:591px;width:1px;height:7px;background:#474747;"></div>
<div class="t" style="left:95px;top:591.84px;font-size:6.1px;line-height:6.1px;color:#d8d8d8;">Doc: 1,69 MB/2,25 MB</div>
<div class="t" style="left:196px;top:591.67px;font-size:6.3px;line-height:6.3px;color:#d8d8d8;">&gt;</div>
<div style="left:0px;top:598.5px;width:1000px;height:4.5px;background:#3a3a3a;"></div>
<div style="left:84px;top:151px;width:632px;height:355px;background:repeating-conic-gradient(#cccccc 0 25%, #ffffff 0 50%) 0 0/10px 10px;"></div>
<div style="left:83px;top:150px;width:634px;height:1px;background:#1a1a1a;"></div>
<div style="left:716px;top:151px;width:1px;height:356px;background:#1a1a1a;"></div>
<div style="left:83px;top:506px;width:634px;height:1px;background:#1a1a1a;"></div>
<svg style="left:281px;top:190px;width:237px;height:270px" viewBox="0 0 237 270">
<defs>
<clipPath id="rr"><rect width="237" height="270" rx="15" ry="15"/></clipPath>
<radialGradient id="mg" gradientUnits="userSpaceOnUse" cx="60" cy="245" r="250">
<stop offset="0" stop-color="#f4d898"/>
<stop offset="0.22" stop-color="#e6bb7a"/>
<stop offset="0.45" stop-color="#cf9058"/>
<stop offset="0.7" stop-color="#ad6a42"/>
<stop offset="1" stop-color="#8e5032"/>
</radialGradient>
<filter id="tx" x="0" y="0" width="100%" height="100%">
<feTurbulence type="fractalNoise" baseFrequency="0.18" numOctaves="4" seed="11"/>
<feColorMatrix type="matrix" values="0 0 0 0 0.12  0 0 0 0 0.06  0 0 0 0 0.02  0 0 0 -2.4 1.3"/>
<feComposite in2="SourceGraphic" operator="in"/>
<feGaussianBlur stdDeviation="0.5"/>
</filter>
<filter id="tx2" x="0" y="0" width="100%" height="100%">
<feTurbulence type="fractalNoise" baseFrequency="0.25" numOctaves="3" seed="3"/>
<feColorMatrix type="matrix" values="0 0 0 0 1  0 0 0 0 0.9  0 0 0 0 0.7  0 0 0 3.0 -1.75"/>
<feComposite in2="SourceGraphic" operator="in"/>
</filter>
<filter id="bl"><feGaussianBlur stdDeviation="7"/></filter>
<filter id="bl2" x="-50%" y="-50%" width="200%" height="200%"><feGaussianBlur stdDeviation="5"/></filter>
<clipPath id="mc"><path d="M219.0 37.0C220.8 42.8 222.5 56.2 223.0 65.0C223.5 73.8 223.3 81.7 222.0 90.0C220.7 98.3 218.2 107.5 215.0 115.0C211.8 122.5 207.0 128.3 203.0 135.0C199.0 141.7 194.5 147.8 191.0 155.0C187.5 162.2 184.8 170.2 182.0 178.0C179.2 185.8 177.8 194.3 174.0 202.0C170.2 209.7 164.7 217.5 159.0 224.0C153.3 230.5 146.0 236.3 140.0 241.0C134.0 245.7 128.8 249.3 123.0 252.0C117.2 254.7 111.0 256.3 105.0 257.0C99.0 257.7 93.0 257.5 87.0 256.0C81.0 254.5 75.0 251.7 69.0 248.0C63.0 244.3 56.0 239.0 51.0 234.0C46.0 229.0 42.7 224.2 39.0 218.0C35.3 211.8 32.3 206.7 29.0 197.0C25.7 187.3 21.0 172.8 19.0 160.0C17.0 147.2 16.0 133.3 17.0 120.0C18.0 106.7 19.7 92.0 25.0 80.0C30.3 68.0 40.0 56.7 49.0 48.0C58.0 39.3 69.0 32.7 79.0 28.0C89.0 23.3 98.5 22.2 109.0 20.0C119.5 17.8 132.0 15.8 142.0 15.0C152.0 14.2 160.2 14.0 169.0 15.0C177.8 16.0 187.8 18.5 195.0 21.0C202.2 23.5 208.0 27.3 212.0 30.0C216.0 32.7 217.2 31.2 219.0 37.0Z"/></clipPath>
</defs>
<g clip-path="url(#rr)">
<rect width="237" height="270" fill="#030303"/>
<g clip-path="url(#mc)">
<rect width="237" height="270" fill="url(#mg)"/>
<g filter="url(#bl)">
<ellipse cx="198" cy="105" rx="26" ry="32" fill="#4e2c18" opacity="0.6"/>
<ellipse cx="178" cy="185" rx="14" ry="30" fill="#5a3520" opacity="0.5"/>
<ellipse cx="150" cy="68" rx="42" ry="22" fill="#6e3a20" opacity="0.35"/>
<ellipse cx="160" cy="95" rx="22" ry="14" fill="#7e4a2c" opacity="0.3"/>
<ellipse cx="140" cy="22" rx="75" ry="12" fill="#5a3020" opacity="0.45"/>
</g>
<g filter="url(#bl2)">
<path d="M219.0 37.0C219.7 41.7 222.5 56.2 223.0 65.0C223.5 73.8 223.3 81.7 222.0 90.0C220.7 98.3 218.2 107.5 215.0 115.0C211.8 122.5 207.0 128.3 203.0 135.0C199.0 141.7 194.5 147.8 191.0 155.0C187.5 162.2 184.8 170.2 182.0 178.0C179.2 185.8 177.8 194.3 174.0 202.0C170.2 209.7 164.7 217.5 159.0 224.0C153.3 230.5 146.0 236.3 140.0 241.0C134.0 245.7 125.8 250.2 123.0 252.0" fill="none" stroke="#000" stroke-width="22" opacity="0.75"/>
</g>
<rect width="237" height="270" fill="#000" filter="url(#tx)" opacity="0.28"/>
<rect width="237" height="270" fill="#000" filter="url(#tx2)" opacity="0.12"/>
</g>
</g>
</svg>
<div style="left:21px;top:14px;width:173px;height:379px;background:#f0f0f0;border:1px solid #cfcfcf;border-top:none;box-sizing:border-box;box-shadow:1px 1px 1px rgba(0,0,0,0.55);"></div>
<div style="left:23px;top:89px;width:169px;height:1px;background:#d4d4d4;"></div>
<div style="left:23px;top:90px;width:169px;height:1px;background:#fbfbfb;"></div>
<div style="left:23px;top:178px;width:169px;height:1px;background:#d4d4d4;"></div>
<div style="left:23px;top:179px;width:169px;height:1px;background:#fbfbfb;"></div>
<div style="left:23px;top:232px;width:169px;height:1px;background:#d4d4d4;"></div>
<div style="left:23px;top:233px;width:169px;height:1px;background:#fbfbfb;"></div>
<div style="left:23px;top:285px;width:169px;height:1px;background:#d4d4d4;"></div>
<div style="left:23px;top:286px;width:169px;height:1px;background:#fbfbfb;"></div>
<div style="left:23px;top:327px;width:169px;height:1px;background:#d4d4d4;"></div>
<div style="left:23px;top:328px;width:169px;height:1px;background:#fbfbfb;"></div>
<div style="left:23px;top:346px;width:169px;height:1px;background:#d4d4d4;"></div>
<div style="left:23px;top:347px;width:169px;height:1px;background:#fbfbfb;"></div>
<div style="left:23px;top:376px;width:169px;height:1px;background:#d4d4d4;"></div>
<div style="left:23px;top:377px;width:169px;height:1px;background:#fbfbfb;"></div>
<div style="left:22px;top:182px;width:168px;height:12px;background:#0d6fcf;border:1px solid #8ed0f5;box-sizing:border-box;"></div>
<div class="t" style="left:33px;top:19.15px;font-size:7.5px;line-height:7.5px;color:#000000;-webkit-text-stroke:0.3px #000000;transform-origin:0 50%;">Nuevo...</div>
<div class="t" style="right:818px;top:19.15px;font-size:7.5px;line-height:7.5px;color:#000000;-webkit-text-stroke:0.3px #000000;transform-origin:100% 50%;">Ctrl+N</div>
<div class="t" style="left:33px;top:30.85px;font-size:7.5px;line-height:7.5px;color:#000000;-webkit-text-stroke:0.3px #000000;transform-origin:0 50%;">Abrir...</div>
<div class="t" style="right:818px;top:30.85px;font-size:7.5px;line-height:7.5px;color:#000000;-webkit-text-stroke:0.3px #000000;transform-origin:100% 50%;">Ctrl+O</div>
<div class="t" style="left:33px;top:42.55px;font-size:7.5px;line-height:7.5px;color:#000000;-webkit-text-stroke:0.3px #000000;transform-origin:0 50%;">Buscar en Bridge...</div>
<div class="t" style="right:818px;top:42.55px;font-size:7.5px;line-height:7.5px;color:#000000;-webkit-text-stroke:0.3px #000000;transform-origin:100% 50%;">Alt+Ctrl+O</div>
<div class="t" style="left:33px;top:54.35px;font-size:7.5px;line-height:7.5px;color:#000000;-webkit-text-stroke:0.3px #000000;transform-origin:0 50%;">Abrir como...</div>
<div class="t" style="right:818px;top:54.35px;font-size:7.5px;line-height:7.5px;color:#000000;-webkit-text-stroke:0.3px #000000;transform-origin:100% 50%;">Alt+Mayús+Ctrl+O</div>
<div class="t" style="left:33px;top:66.05px;font-size:7.5px;line-height:7.5px;color:#000000;-webkit-text-stroke:0.3px #000000;transform-origin:0 50%;">Abrir como objeto inteligente...</div>
<div class="t" style="left:33px;top:77.75px;font-size:7.5px;line-height:7.5px;color:#000000;-webkit-text-stroke:0.3px #000000;transform-origin:0 50%;">Abrir recientes</div>
<svg style="left:185px;top:77.6px;width:3px;height:5px" viewBox="0 0 3 5"><path d="M0 0L3 2.5L0 5Z" fill="#222"/></svg>
<div class="t" style="left:33px;top:95.65px;font-size:7.5px;line-height:7.5px;color:#000000;-webkit-text-stroke:0.3px #000000;transform-origin:0 50%;">Cerrar</div>
<div class="t" style="right:818px;top:95.65px;font-size:7.5px;line-height:7.5px;color:#000000;-webkit-text-stroke:0.3px #000000;transform-origin:100% 50%;">Ctrl+W</div>
<div class="t" style="left:33px;top:107.35px;font-size:7.5px;line-height:7.5px;color:#000000;-webkit-text-stroke:0.3px #000000;transform-origin:0 50%;">Cerrar todo</div>
<div class="t" style="right:818px;top:107.35px;font-size:7.5px;line-height:7.5px;color:#000000;-webkit-text-stroke:0.3px #000000;transform-origin:100% 50%;">Alt+Ctrl+W</div>
<div class="t" style="left:33px;top:119.05px;font-size:7.5px;line-height:7.5px;color:#9a9a9a;-webkit-text-stroke:0.3px #9a9a9a;transform-origin:0 50%;">Cerrar otros</div>
<div class="t" style="right:818px;top:119.05px;font-size:7.5px;line-height:7.5px;color:#9a9a9a;-webkit-text-stroke:0.3px #9a9a9a;transform-origin:100% 50%;">Alt+Ctrl+P</div>
<div class="t" style="left:33px;top:130.85px;font-size:7.5px;line-height:7.5px;color:#000000;-webkit-text-stroke:0.3px #000000;transform-origin:0 50%;">Cerrar e ir a Bridge...</div>
<div class="t" style="right:818px;top:130.85px;font-size:7.5px;line-height:7.5px;color:#000000;-webkit-text-stroke:0.3px #000000;transform-origin:100% 50%;">Mayús+Ctrl+W</div>
<div class="t" style="left:33px;top:142.55px;font-size:7.5px;line-height:7.5px;color:#000000;-webkit-text-stroke:0.3px #000000;transform-origin:0 50%;">Guardar</div>
<div class="t" style="right:818px;top:142.55px;font-size:7.5px;line-height:7.5px;color:#000000;-webkit-text-stroke:0.3px #000000;transform-origin:100% 50%;">Ctrl+S</div>
<div class="t" style="left:33px;top:154.25px;font-size:7.5px;line-height:7.5px;color:#000000;-webkit-text-stroke:0.3px #000000;transform-origin:0 50%;">Guardar como...</div>
<div class="t" style="right:818px;top:154.25px;font-size:7.5px;line-height:7.5px;color:#000000;-webkit-text-stroke:0.3px #000000;transform-origin:100% 50%;">Mayús+Ctrl+S</div>
<div class="t" style="left:33px;top:165.95px;font-size:7.5px;line-height:7.5px;color:#9a9a9a;-webkit-text-stroke:0.3px #9a9a9a;transform-origin:0 50%;">Volver</div>
<div class="t" style="right:818px;top:165.95px;font-size:7.5px;line-height:7.5px;color:#9a9a9a;-webkit-text-stroke:0.3px #9a9a9a;transform-origin:100% 50%;">F12</div>
<div class="t" style="left:33px;top:185.05px;font-size:7.5px;line-height:7.5px;color:#cfe9ff;-webkit-text-stroke:0.3px #cfe9ff;transform-origin:0 50%;">Exportar</div>
<svg style="left:185px;top:184.9px;width:3px;height:5px" viewBox="0 0 3 5"><path d="M0 0L3 2.5L0 5Z" fill="#cfe9ff"/></svg>
<div class="t" style="left:33px;top:196.75px;font-size:7.5px;line-height:7.5px;color:#000000;-webkit-text-stroke:0.3px #000000;transform-origin:0 50%;">Generar</div>
<svg style="left:185px;top:196.6px;width:3px;height:5px" viewBox="0 0 3 5"><path d="M0 0L3 2.5L0 5Z" fill="#222"/></svg>
<div class="t" style="left:33px;top:208.45px;font-size:7.5px;line-height:7.5px;color:#000000;-webkit-text-stroke:0.3px #000000;transform-origin:0 50%;">Compartir...</div>
<div class="t" style="left:33px;top:220.15px;font-size:7.5px;line-height:7.5px;color:#000000;-webkit-text-stroke:0.3px #000000;transform-origin:0 50%;">Compartir en Behance...</div>
<div class="t" style="left:33px;top:237.65px;font-size:7.5px;line-height:7.5px;color:#000000;-webkit-text-stroke:0.3px #000000;transform-origin:0 50%;">Buscar Adobe Stock...</div>
<div class="t" style="left:33px;top:249.35px;font-size:7.5px;line-height:7.5px;color:#000000;-webkit-text-stroke:0.3px #000000;transform-origin:0 50%;">Colocar elemento incrustado...</div>
<div class="t" style="left:33px;top:261.05px;font-size:7.5px;line-height:7.5px;color:#000000;-webkit-text-stroke:0.3px #000000;transform-origin:0 50%;">Colocar elementos enlazados...</div>
<div class="t" style="left:33px;top:272.85px;font-size:7.5px;line-height:7.5px;color:#9a9a9a;-webkit-text-stroke:0.3px #9a9a9a;transform-origin:0 50%;">Empaquetar...</div>
<div class="t" style="left:33px;top:292.35px;font-size:7.5px;line-height:7.5px;color:#000000;-webkit-text-stroke:0.3px #000000;transform-origin:0 50%;">Automatizar</div>
<svg style="left:185px;top:292.2px;width:3px;height:5px" viewBox="0 0 3 5"><path d="M0 0L3 2.5L0 5Z" fill="#222"/></svg>
<div class="t" style="left:33px;top:304.05px;font-size:7.5px;line-height:7.5px;color:#000000;-webkit-text-stroke:0.3px #000000;transform-origin:0 50%;">Secuencias de comandos</div>
<svg style="left:185px;top:303.9px;width:3px;height:5px" viewBox="0 0 3 5"><path d="M0 0L3 2.5L0 5Z" fill="#222"/></svg>
<div class="t" style="left:33px;top:315.75px;font-size:7.5px;line-height:7.5px;color:#000000;-webkit-text-stroke:0.3px #000000;transform-origin:0 50%;">Importar</div>
<svg style="left:185px;top:315.6px;width:3px;height:5px" viewBox="0 0 3 5"><path d="M0 0L3 2.5L0 5Z" fill="#222"/></svg>
<div class="t" style="left:33px;top:333.65px;font-size:7.5px;line-height:7.5px;color:#000000;-webkit-text-stroke:0.3px #000000;transform-origin:0 50%;">Información de archivo...</div>
<div class="t" style="right:818px;top:333.65px;font-size:7.5px;line-height:7.5px;color:#000000;-webkit-text-stroke:0.3px #000000;transform-origin:100% 50%;">Alt+Mayús+Ctrl+I</div>
<div class="t" style="left:33px;top:352.15px;font-size:7.5px;line-height:7.5px;color:#000000;-webkit-text-stroke:0.3px #000000;transform-origin:0 50%;">Imprimir...</div>
<div class="t" style="right:818px;top:352.15px;font-size:7.5px;line-height:7.5px;color:#000000;-webkit-text-stroke:0.3px #000000;transform-origin:100% 50%;">Ctrl+P</div>
<div class="t" style="left:33px;top:363.85px;font-size:7.5px;line-height:7.5px;color:#000000;-webkit-text-stroke:0.3px #000000;transform-origin:0 50%;">Imprimir una copia</div>
<div class="t" style="right:818px;top:363.85px;font-size:7.5px;line-height:7.5px;color:#000000;-webkit-text-stroke:0.3px #000000;transform-origin:100% 50%;">Alt+Mayús+Ctrl+P</div>
<div class="t" style="left:33px;top:382.15px;font-size:7.5px;line-height:7.5px;color:#000000;-webkit-text-stroke:0.3px #000000;transform-origin:0 50%;">Salir</div>
<div class="t" style="right:818px;top:382.15px;font-size:7.5px;line-height:7.5px;color:#000000;-webkit-text-stroke:0.3px #000000;transform-origin:100% 50%;">Ctrl+Q</div>
<div style="left:190px;top:180px;width:195px;height:206px;background:#f0f0f0;border:1px solid #cfcfcf;box-sizing:border-box;box-shadow:1px 1px 1px rgba(0,0,0,0.55);"></div>
<div style="left:190px;top:180px;width:1px;height:206px;background:#a8a8a8;"></div>
<div style="left:192px;top:208px;width:191px;height:1px;background:#d4d4d4;"></div>
<div style="left:192px;top:209px;width:191px;height:1px;background:#fbfbfb;"></div>
<div style="left:192px;top:228px;width:191px;height:1px;background:#d4d4d4;"></div>
<div style="left:192px;top:229px;width:191px;height:1px;background:#fbfbfb;"></div>
<div style="left:192px;top:245px;width:191px;height:1px;background:#d4d4d4;"></div>
<div style="left:192px;top:246px;width:191px;height:1px;background:#fbfbfb;"></div>
<div style="left:192px;top:334px;width:191px;height:1px;background:#d4d4d4;"></div>
<div style="left:192px;top:335px;width:191px;height:1px;background:#fbfbfb;"></div>
<div style="left:191px;top:181px;width:193px;height:13px;background:#0d6fcf;border:1px solid #8ed0f5;box-sizing:border-box;"></div>
<div class="t" style="left:202.5px;top:185.15px;font-size:7.5px;line-height:7.5px;color:#cfe9ff;-webkit-text-stroke:0.3px #cfe9ff;transform-origin:0 50%;">Exportación rápida como PNG</div>
<div class="t" style="left:202.5px;top:196.65px;font-size:7.5px;line-height:7.5px;color:#000000;-webkit-text-stroke:0.3px #000000;transform-origin:0 50%;">Exportar como...</div>
<div class="t" style="right:626.5px;top:196.65px;font-size:7.5px;line-height:7.5px;color:#000000;-webkit-text-stroke:0.3px #000000;transform-origin:100% 50%;">Alt+Mayús+Ctrl+W</div>
<div class="t" style="left:202.5px;top:215.15px;font-size:7.5px;line-height:7.5px;color:#000000;-webkit-text-stroke:0.3px #000000;transform-origin:0 50%;">Preferencias de exportación...</div>
<div class="t" style="left:202.5px;top:232.65px;font-size:7.5px;line-height:7.5px;color:#000000;-webkit-text-stroke:0.3px #000000;transform-origin:0 50%;">Guardar para Web (heredado)...</div>
<div class="t" style="right:626.5px;top:232.65px;font-size:7.5px;line-height:7.5px;color:#000000;-webkit-text-stroke:0.3px #000000;transform-origin:100% 50%;">Alt+Mayús+Ctrl+S</div>
<div class="t" style="left:202.5px;top:251.45px;font-size:7.5px;line-height:7.5px;color:#000000;-webkit-text-stroke:0.3px #000000;transform-origin:0 50%;">Capas a archivos...</div>
<div class="t" style="left:202.5px;top:263.05px;font-size:7.5px;line-height:7.5px;color:#9a9a9a;-webkit-text-stroke:0.3px #9a9a9a;transform-origin:0 50%;">Composiciones de capas a archivos...</div>
<div class="t" style="left:202.5px;top:274.65px;font-size:7.5px;line-height:7.5px;color:#9a9a9a;-webkit-text-stroke:0.3px #9a9a9a;transform-origin:0 50%;">Composiciones de capas a PDF...</div>
<div class="t" style="left:202.5px;top:286.35px;font-size:7.5px;line-height:7.5px;color:#000000;-webkit-text-stroke:0.3px #000000;transform-origin:0 50%;">Exportar para Aero...</div>
<div class="t" style="left:202.5px;top:298.05px;font-size:7.5px;line-height:7.5px;color:#9a9a9a;-webkit-text-stroke:0.3px #9a9a9a;transform-origin:0 50%;">Mesas de trabajo a archivos...</div>
<div class="t" style="left:202.5px;top:309.65px;font-size:7.5px;line-height:7.5px;color:#9a9a9a;-webkit-text-stroke:0.3px #9a9a9a;transform-origin:0 50%;">Mesas de trabajo a PDF...</div>
<div class="t" style="left:202.5px;top:321.35px;font-size:7.5px;line-height:7.5px;color:#000000;-webkit-text-stroke:0.3px #000000;transform-origin:0 50%;">Tablas de consulta de colores...</div>
<div class="t" style="left:202.5px;top:340.65px;font-size:7.5px;line-height:7.5px;color:#9a9a9a;-webkit-text-stroke:0.3px #9a9a9a;transform-origin:0 50%;">Conjuntos de datos como archivos...</div>
<div class="t" style="left:202.5px;top:352.35px;font-size:7.5px;line-height:7.5px;color:#000000;-webkit-text-stroke:0.3px #000000;transform-origin:0 50%;">Interpretar vídeo...</div>
<div class="t" style="left:202.5px;top:363.95px;font-size:7.5px;line-height:7.5px;color:#000000;-webkit-text-stroke:0.3px #000000;transform-origin:0 50%;">Trazados a Illustrator...</div>
<div class="t" style="left:202.5px;top:375.65px;font-size:7.5px;line-height:7.5px;color:#000000;-webkit-text-stroke:0.3px #000000;transform-origin:0 50%;">Zoomify...</div>
<svg style="left:300px;top:100px;width:140px;height:100px" viewBox="300 100 140 100"><path d="M414.5 121.5L330 180" stroke="#d5414a" stroke-width="2.6" stroke-linecap="round"/><path d="M322 185.5L325.5 177L332 183.5Z" fill="#d5414a" stroke="#d5414a" stroke-width="1.4" stroke-linejoin="round"/></svg>
<div style="left:761px;top:38px;width:239px;height:565px;background:#474747;"></div>
<div style="left:761px;top:38px;width:239px;height:9px;background:#424242;"></div>
<svg style="left:785px;top:39.5px;width:8px;height:6px" viewBox="0 0 8 6"><path d="M3.5 0.5L0.8 3L3.5 5.5M7 0.5L4.3 3L7 5.5" fill="none" stroke="#f0f0f0" stroke-width="1.3"/></svg>
<svg style="left:962px;top:39.5px;width:8px;height:6px" viewBox="0 0 8 6"><path d="M0.5 0.5L3.2 3L0.5 5.5M4 0.5L6.7 3L4 5.5" fill="none" stroke="#f0f0f0" stroke-width="1.3"/></svg>
<svg style="left:987px;top:39.5px;width:8px;height:6px" viewBox="0 0 8 6"><path d="M3.5 0.5L0.8 3L3.5 5.5M7 0.5L4.3 3L7 5.5" fill="none" stroke="#f0f0f0" stroke-width="1.3"/></svg>
<div style="left:771px;top:47px;width:1px;height:556px;background:#3c3c3c;"></div>
<div style="left:772px;top:47px;width:23px;height:556px;background:#4a4a4a;"></div>
<div style="left:795px;top:47px;width:2px;height:556px;background:#3c3c3c;"></div>
<div style="left:772px;top:47px;width:23px;height:23px;background:#535353;"></div>
<div style="left:772px;top:70px;width:23px;height:1px;background:#3c3c3c;"></div>
<div style="left:772px;top:71px;width:23px;height:43px;background:#535353;"></div>
<div style="left:772px;top:113px;width:23px;height:1px;background:#3c3c3c;"></div>
<svg style="left:778.5px;top:53.0px;width:10px;height:12px" viewBox="0 0 10 12"><rect x="1.5" y="1" width="3" height="10" fill="none" stroke="#e0e0e0" stroke-width="0.8"/><circle cx="3" cy="3" r="0.8" fill="#e0e0e0"/><circle cx="3" cy="6" r="0.8" fill="#e0e0e0"/><rect x="2" y="8.5" width="2" height="2" fill="#e0e0e0"/><path d="M6.5 1.5c3 1 3 8 0 9" stroke="#e0e0e0" fill="none" stroke-width="1.2"/></svg>
<svg style="left:777.5px;top:79.0px;width:12px;height:12px" viewBox="0 0 12 12"><path d="M1 2h2M1 4h2M1 6h2" stroke="#e0e0e0" stroke-width="0.8"/><path d="M10 1.5L5 7" stroke="#e0e0e0" stroke-width="1.5"/><path d="M2 11c0-2 1-3 3-3.2l0.6 0.6C5.4 10.5 4 11 2 11z" fill="#e0e0e0"/></svg>
<svg style="left:777.5px;top:96.5px;width:12px;height:11px" viewBox="0 0 12 11"><path d="M1 3h9M1 8h6" stroke="#e0e0e0" stroke-width="1.2"/><path d="M1 3l2-2v4z" fill="#e0e0e0"/><path d="M7 8l3-2.5v5z" fill="#e0e0e0"/></svg>
<div style="left:797px;top:47px;width:175px;height:556px;background:#535353;"></div>
<div style="left:972px;top:47px;width:3px;height:556px;background:#3c3c3c;"></div>
<div style="left:975px;top:47px;width:25px;height:556px;background:#4a4a4a;"></div>
<div style="left:975px;top:47px;width:25px;height:28px;background:#535353;"></div>
<div style="left:975px;top:75px;width:25px;height:1px;background:#3c3c3c;"></div>
<div style="left:975px;top:76px;width:25px;height:22px;background:#535353;"></div>
<div style="left:975px;top:98px;width:25px;height:1px;background:#3c3c3c;"></div>
<svg style="left:981.0px;top:53.0px;width:10px;height:12px" viewBox="0 0 10 12"><circle cx="5" cy="4.5" r="3.6" fill="none" stroke="#e0e0e0" stroke-width="1"/><rect x="3.5" y="8.5" width="3" height="2.5" fill="#e0e0e0"/></svg>
<svg style="left:980.5px;top:79.5px;width:11px;height:11px" viewBox="0 0 11 11"><rect x="1" y="1.5" width="9" height="8" fill="none" stroke="#e0e0e0" stroke-width="1"/><rect x="3" y="1.5" width="3" height="5" fill="#e0e0e0"/></svg>
<div style="left:797px;top:47px;width:175px;height:16px;background:#424242;"></div>
<div style="left:797px;top:47px;width:25px;height:16px;background:#535353;"></div>
<div class="t" style="left:802.5px;top:50.38px;font-size:6.4px;line-height:6.4px;color:#f0f0f0;font-weight:bold;">Color</div>
<div class="t" style="left:828.6px;top:50.38px;font-size:6.4px;line-height:6.4px;color:#a8a8a8;">Muestras</div>
<div style="left:962px;top:51px;width:7px;height:6px;background:#6a6a6a;"></div>
<div style="left:963px;top:52.0px;width:5px;height:0.6px;background:#9a9a9a;"></div>
<div style="left:963px;top:53.6px;width:5px;height:0.6px;background:#9a9a9a;"></div>
<div style="left:963px;top:55.2px;width:5px;height:0.6px;background:#9a9a9a;"></div>
<div style="left:809px;top:76px;width:12px;height:12px;background:#22c05a;border:1px solid #2a2a2a;box-sizing:border-box;"></div>
<div style="left:802px;top:70px;width:13px;height:12px;background:#f4f4f4;border:1px solid #3a3a3a;box-sizing:border-box;"></div>
<div style="left:825px;top:67px;width:115px;height:149px;background:linear-gradient(to bottom, rgba(0,0,0,0) 0%, rgba(0,0,0,0.2) 25%, rgba(0,0,0,0.43) 50%, rgba(0,0,0,0.7) 75%, rgba(0,0,0,1) 100%), linear-gradient(to right, #fff, #ff0000);"></div>
<svg style="left:821px;top:63px;width:9px;height:9px" viewBox="0 0 9 9"><circle cx="4" cy="4" r="3" fill="none" stroke="#ddd" stroke-width="1"/><circle cx="4" cy="4" r="2" fill="none" stroke="#222" stroke-width="0.8"/></svg>
<div style="left:950px;top:67px;width:13px;height:149px;background:linear-gradient(to bottom, #ff0000 0%, #ff00ff 16.7%, #0000ff 33.3%, #00ffff 50%, #00ff00 66.7%, #ffff00 83.3%, #ff0000 100%);"></div>
<svg style="left:945px;top:212px;width:5px;height:7px" viewBox="0 0 5 7"><path d="M0.5 0.5L4.5 3.5L0.5 6.5Z" fill="#f0f0f0"/></svg>
<div style="left:797px;top:229px;width:175px;height:2px;background:#3c3c3c;"></div>
<div style="left:797px;top:231px;width:175px;height:17px;background:#424242;"></div>
<div style="left:797px;top:231px;width:46px;height:17px;background:#535353;"></div>
<div class="t" style="left:802px;top:236.18px;font-size:6.4px;line-height:6.4px;color:#f0f0f0;font-weight:bold;">Propiedades</div>
<div class="t" style="left:849px;top:236.18px;font-size:6.4px;line-height:6.4px;color:#a0a0a0;">Ajustes</div>
<div style="left:962px;top:236px;width:7px;height:6px;background:#6a6a6a;"></div>
<div style="left:963px;top:237.0px;width:5px;height:0.6px;background:#9a9a9a;"></div>
<div style="left:963px;top:238.6px;width:5px;height:0.6px;background:#9a9a9a;"></div>
<div style="left:963px;top:240.2px;width:5px;height:0.6px;background:#9a9a9a;"></div>
<div style="left:804px;top:252px;width:13px;height:13px;background:#3a3a3a;"></div>
<svg style="left:806.0px;top:254.5px;width:9px;height:8px" viewBox="0 0 9 8"><rect x="0.5" y="0.5" width="8" height="7" fill="none" stroke="#eee" stroke-width="0.9"/><path d="M1 7.5L3.5 4L5.5 6L7 4.5L8.5 7.5Z" fill="#eee"/><circle cx="6.5" cy="2.3" r="0.8" fill="#eee"/></svg>
<div class="t" style="left:821px;top:257.25px;font-size:6.2px;line-height:6.2px;color:#d8d8d8;">Capa de píxeles</div>
<div style="left:799px;top:269px;width:163px;height:1px;background:#474747;"></div>
<div style="left:962px;top:271px;width:8px;height:124px;background:#4a4a4a;"></div>
<div style="left:963px;top:281px;width:6px;height:72px;background:#5c5c5c;"></div>
<svg style="left:963px;top:273px;width:6px;height:4px" viewBox="0 0 6 4"><path d="M0.5 3.5L3 1L5.5 3.5" fill="none" stroke="#888" stroke-width="0.8"/></svg>
<svg style="left:963px;top:389px;width:6px;height:4px" viewBox="0 0 6 4"><path d="M0.5 0.5L3 3L5.5 0.5" fill="none" stroke="#888" stroke-width="0.8"/></svg>
<svg style="left:802px;top:276px;width:7px;height:4px" viewBox="0 0 7 4"><path d="M0.5 0.5L3.5 3.5L6.5 0.5" fill="none" stroke="#bbb" stroke-width="0.9"/></svg>
<div class="t" style="left:811px;top:275.58px;font-size:6.4px;line-height:6.4px;color:#eeeeee;font-weight:bold;">Transformar</div>
<div style="left:803px;top:293px;width:13px;height:15px;background:#3a3a3a;"></div>
<svg style="left:805.5px;top:294.5px;width:8px;height:12px" viewBox="0 0 8 12"><path d="M3 0.5h2v4h-2zM3 7.5h2v4h-2zM4 4v4" fill="none" stroke="#e6e6e6" stroke-width="0.9"/></svg>
<div class="t" style="left:825px;top:291.75px;font-size:6.2px;line-height:6.2px;color:#d0d0d0;">An</div>
<div style="left:836px;top:289px;width:31px;height:11px;background:#434343;"></div>
<div class="t" style="left:838px;top:291.75px;font-size:6.2px;line-height:6.2px;color:#e6e6e6;">385 px</div>
<div class="t" style="left:879px;top:291.75px;font-size:6.2px;line-height:6.2px;color:#d0d0d0;">X</div>
<div style="left:888px;top:289px;width:32px;height:11px;background:#434343;"></div>
<div class="t" style="left:890px;top:291.75px;font-size:6.2px;line-height:6.2px;color:#e6e6e6;">319 px</div>
<div class="t" style="left:826px;top:307.25px;font-size:6.2px;line-height:6.2px;color:#d0d0d0;">Al</div>
<div style="left:836px;top:304px;width:31px;height:11px;background:#434343;"></div>
<div class="t" style="left:838px;top:307.25px;font-size:6.2px;line-height:6.2px;color:#e6e6e6;">439 px</div>
<div class="t" style="left:880px;top:307.25px;font-size:6.2px;line-height:6.2px;color:#d0d0d0;">Y</div>
<div style="left:888px;top:304px;width:32px;height:11px;background:#434343;"></div>
<div class="t" style="left:890px;top:307.25px;font-size:6.2px;line-height:6.2px;color:#e6e6e6;">63 px</div>
<svg style="left:821.5px;top:321.5px;width:10px;height:9px" viewBox="0 0 10 9"><path d="M0.5 8.5h9M0.5 8.5L8 1.5" fill="none" stroke="#ddd" stroke-width="0.9"/><path d="M4 8.5a3 3 0 0 0 -1 -3" fill="none" stroke="#ddd" stroke-width="0.8"/></svg>
<div style="left:836px;top:320px;width:22px;height:11px;background:#434343;"></div>
<div class="t" style="left:838px;top:323.25px;font-size:6.2px;line-height:6.2px;color:#e6e6e6;">0,00°</div>
<div style="left:859px;top:320px;width:8px;height:11px;background:#3e3e3e;"></div>
<svg style="left:860px;top:324px;width:6px;height:4px" viewBox="0 0 6 4"><path d="M0.5 0.5L3 3L5.5 0.5" fill="none" stroke="#bbb" stroke-width="0.8"/></svg>
<svg style="left:888.0px;top:321.0px;width:12px;height:10px" viewBox="0 0 12 10"><path d="M0.5 1.5v7l4-3.5zM11.5 1.5v7l-4-3.5z" fill="none" stroke="#ddd" stroke-width="0.9"/><path d="M6 0v10" stroke="#ddd" stroke-width="0.5" stroke-dasharray="1 1"/></svg>
<svg style="left:908.0px;top:320.0px;width:10px;height:12px" viewBox="0 0 10 12"><path d="M1.5 0.5h7l-3.5 3.5zM1.5 11.5h7l-3.5-4z" fill="#ddd"/><path d="M0 6h10" stroke="#ddd" stroke-width="0.5" stroke-dasharray="1 1"/></svg>
<div style="left:799px;top:341px;width:163px;height:1px;background:#474747;"></div>
<svg style="left:802px;top:348px;width:7px;height:4px" viewBox="0 0 7 4"><path d="M0.5 0.5L3.5 3.5L6.5 0.5" fill="none" stroke="#bbb" stroke-width="0.9"/></svg>
<div class="t" style="left:812px;top:347.58px;font-size:6.4px;line-height:6.4px;color:#eeeeee;font-weight:bold;">Alinear y distribuir</div>
<div class="t" style="left:802px;top:361.75px;font-size:6.2px;line-height:6.2px;color:#d0d0d0;">Alinear:</div>
<svg style="left:805.5px;top:376.0px;width:9px;height:10px" viewBox="0 0 9 10"><path d="M0.5 0v10" stroke="#d0d0d0" stroke-width="0.9"/><rect x="1.5" y="2" width="5" height="2" fill="#d0d0d0"/><rect x="1.5" y="6" width="7" height="2" fill="#d0d0d0"/></svg>
<svg style="left:823.5px;top:376.0px;width:9px;height:10px" viewBox="0 0 9 10"><path d="M4.5 0v10" stroke="#d0d0d0" stroke-width="0.9"/><rect x="2" y="2" width="5" height="2" fill="#d0d0d0"/><rect x="1" y="6" width="7" height="2" fill="#d0d0d0"/></svg>
<svg style="left:840.5px;top:376.0px;width:9px;height:10px" viewBox="0 0 9 10"><path d="M8.5 0v10" stroke="#d0d0d0" stroke-width="0.9"/><rect x="2.5" y="2" width="5" height="2" fill="#d0d0d0"/><rect x="0.5" y="6" width="7" height="2" fill="#d0d0d0"/></svg>
<svg style="left:867.0px;top:376.5px;width:10px;height:9px" viewBox="0 0 10 9"><path d="M0 0.5h10" stroke="#d0d0d0" stroke-width="0.9"/><rect x="2" y="1.5" width="2" height="7" fill="#d0d0d0"/><rect x="6" y="1.5" width="2" height="5" fill="#d0d0d0"/></svg>
<svg style="left:887.0px;top:376.5px;width:10px;height:9px" viewBox="0 0 10 9"><path d="M0 4.5h10" stroke="#d0d0d0" stroke-width="0.9"/><rect x="2" y="1" width="2" height="7" fill="#d0d0d0"/><rect x="6" y="2" width="2" height="5" fill="#d0d0d0"/></svg>
<svg style="left:904.0px;top:376.5px;width:10px;height:9px" viewBox="0 0 10 9"><path d="M0 8.5h10" stroke="#d0d0d0" stroke-width="0.9"/><rect x="2" y="0.5" width="2" height="7" fill="#d0d0d0"/><rect x="6" y="2.5" width="2" height="5" fill="#d0d0d0"/></svg>
<div style="left:797px;top:413px;width:175px;height:2px;background:#3c3c3c;"></div>
<div style="left:797px;top:415px;width:175px;height:17px;background:#424242;"></div>
<div style="left:797px;top:415px;width:27px;height:17px;background:#535353;"></div>
<div class="t" style="left:802px;top:420.78px;font-size:6.4px;line-height:6.4px;color:#f0f0f0;font-weight:bold;">Capas</div>
<div class="t" style="left:830px;top:420.78px;font-size:6.4px;line-height:6.4px;color:#a0a0a0;">Canales</div>
<div class="t" style="left:864px;top:420.78px;font-size:6.4px;line-height:6.4px;color:#a0a0a0;">Trazados</div>
<div style="left:962px;top:421px;width:7px;height:6px;background:#6a6a6a;"></div>
<div style="left:963px;top:422.0px;width:5px;height:0.6px;background:#9a9a9a;"></div>
<div style="left:963px;top:423.6px;width:5px;height:0.6px;background:#9a9a9a;"></div>
<div style="left:963px;top:425.2px;width:5px;height:0.6px;background:#9a9a9a;"></div>
<div style="left:800px;top:439px;width:65px;height:13px;background:#434343;"></div>
<svg style="left:802.0px;top:441.5px;width:8px;height:8px" viewBox="0 0 8 8"><circle cx="3.2" cy="3.2" r="2.4" fill="none" stroke="#e6e6e6" stroke-width="1"/><path d="M5 5L7.5 7.5" stroke="#e6e6e6" stroke-width="1.2"/></svg>
<div class="t" style="left:813px;top:443.25px;font-size:6.2px;line-height:6.2px;color:#e6e6e6;">Tipo</div>
<svg style="left:857px;top:444px;width:6px;height:4px" viewBox="0 0 6 4"><path d="M0.5 0.5L3 3L5.5 0.5" fill="none" stroke="#bbb" stroke-width="0.8"/></svg>
<svg style="left:878.0px;top:440.5px;width:10px;height:9px" viewBox="0 0 10 9"><rect x="0.5" y="0.5" width="9" height="8" fill="none" stroke="#e6e6e6" stroke-width="0.9"/><path d="M1.5 7L4 4l2 2 1.5-1.5L9 7z" fill="#e6e6e6"/></svg>
<svg style="left:893.5px;top:440.5px;width:9px;height:9px" viewBox="0 0 9 9"><circle cx="4.5" cy="4.5" r="3.8" fill="none" stroke="#e6e6e6" stroke-width="1"/><path d="M4.5 0.7A3.8 3.8 0 0 1 4.5 8.3z" fill="#e6e6e6"/></svg>
<svg style="left:908.5px;top:440.5px;width:9px;height:9px" viewBox="0 0 9 9"><path d="M0.5 1.5V0.5h8v1M4.5 0.5v8M3 8.5h3" fill="none" stroke="#e6e6e6" stroke-width="1.2"/></svg>
<svg style="left:923.5px;top:440.5px;width:9px;height:9px" viewBox="0 0 9 9"><rect x="1.5" y="1.5" width="6" height="6" fill="none" stroke="#e6e6e6" stroke-width="0.9"/><path d="M0 1.5h2M7 1.5h2M0 7.5h2M7 7.5h2" stroke="#e6e6e6" stroke-width="0.9"/></svg>
<svg style="left:937.5px;top:440.0px;width:9px;height:10px" viewBox="0 0 9 10"><path d="M1 0.5h4l3 3v6H1z" fill="none" stroke="#e6e6e6" stroke-width="0.9"/><rect x="1" y="5" width="4" height="4" fill="#e6e6e6"/></svg>
<svg style="left:960.0px;top:438.0px;width:6px;height:10px" viewBox="0 0 6 10"><circle cx="3" cy="3" r="2.5" fill="#e8e8e8"/><rect x="2" y="5" width="2" height="4" fill="#777"/></svg>
<div style="left:800px;top:456px;width:99px;height:12px;background:#434343;"></div>
<div class="t" style="left:804px;top:459.75px;font-size:6.2px;line-height:6.2px;color:#e6e6e6;">Normal</div>
<svg style="left:892px;top:460px;width:6px;height:4px" viewBox="0 0 6 4"><path d="M0.5 0.5L3 3L5.5 0.5" fill="none" stroke="#bbb" stroke-width="0.8"/></svg>
<div class="t" style="left:903px;top:459.75px;font-size:6.2px;line-height:6.2px;color:#d0d0d0;">Opacidad:</div>
<div style="left:935px;top:456px;width:22px;height:12px;background:#434343;"></div>
<div class="t" style="left:937px;top:459.75px;font-size:6.2px;line-height:6.2px;color:#e6e6e6;">100%</div>
<div style="left:958px;top:456px;width:8px;height:12px;background:#4a4a4a;"></div>
<svg style="left:959px;top:460px;width:6px;height:4px" viewBox="0 0 6 4"><path d="M0.5 0.5L3 3L5.5 0.5" fill="none" stroke="#bbb" stroke-width="0.8"/></svg>
<div class="t" style="left:800px;top:477.25px;font-size:6.2px;line-height:6.2px;color:#d0d0d0;">Bloq.:</div>
<svg style="left:820.5px;top:474.5px;width:9px;height:9px" viewBox="0 0 9 9"><rect x="0.5" y="0.5" width="8" height="8" fill="none" stroke="#e6e6e6" stroke-width="0.8"/><rect x="0.5" y="0.5" width="4" height="4" fill="#e6e6e6"/><rect x="4.5" y="4.5" width="4" height="4" fill="#e6e6e6"/></svg>
<svg style="left:834.5px;top:474.0px;width:9px;height:10px" viewBox="0 0 9 10"><path d="M8.5 0.5L3.5 5.5" stroke="#e6e6e6" stroke-width="1.3"/><path d="M0.5 9c0-2 1-3 2.5-3l0.5 0.5C3.5 8.5 2.5 9 0.5 9z" fill="#e6e6e6"/></svg>
<svg style="left:847.5px;top:474.5px;width:9px;height:9px" viewBox="0 0 9 9"><path d="M4.5 0v9M0 4.5h9M4.5 0L3 1.5M4.5 0L6 1.5M4.5 9L3 7.5M4.5 9L6 7.5M0 4.5L1.5 3M0 4.5L1.5 6M9 4.5L7.5 3M9 4.5L7.5 6" stroke="#e6e6e6" stroke-width="0.9" fill="none"/></svg>
<svg style="left:861.5px;top:474.0px;width:9px;height:10px" viewBox="0 0 9 10"><path d="M0.5 8.5h8M1.5 9V1.5h4l3 3v4" fill="none" stroke="#e6e6e6" stroke-width="0.9"/></svg>
<svg style="left:875.5px;top:474.0px;width:9px;height:10px" viewBox="0 0 9 10"><path d="M2.5 4V2.5a2 2 0 0 1 4 0V4" fill="none" stroke="#e6e6e6" stroke-width="1"/><rect x="1" y="4" width="7" height="5.5" fill="#e6e6e6"/></svg>
<div class="t" style="left:910px;top:477.25px;font-size:6.2px;line-height:6.2px;color:#b8b8b8;">Relleno:</div>
<div style="left:935px;top:473px;width:22px;height:12px;background:#434343;"></div>
<div class="t" style="left:937px;top:476.75px;font-size:6.2px;line-height:6.2px;color:#e6e6e6;">100%</div>
<div style="left:958px;top:473px;width:8px;height:12px;background:#4a4a4a;"></div>
<svg style="left:959px;top:477px;width:6px;height:4px" viewBox="0 0 6 4"><path d="M0.5 0.5L3 3L5.5 0.5" fill="none" stroke="#bbb" stroke-width="0.8"/></svg>
<div style="left:799px;top:488px;width:163px;height:1px;background:#474747;"></div>
<div style="left:816px;top:489px;width:146px;height:16px;background:#676767;"></div>
<div style="left:816px;top:505px;width:146px;height:17px;background:#585858;"></div>
<div style="left:799px;top:522px;width:163px;height:1px;background:#474747;"></div>
<svg style="left:801.5px;top:493.5px;width:9px;height:7px" viewBox="0 0 9 7"><path d="M0.5 3.5C2 1 7 1 8.5 3.5C7 6 2 6 0.5 3.5z" fill="none" stroke="#f0f0f0" stroke-width="0.9"/><circle cx="4.5" cy="3.5" r="1.4" fill="#f0f0f0"/></svg>
<div style="left:817px;top:490px;width:22px;height:15px;border:1px dashed #f4f4f4;box-sizing:border-box;background:repeating-conic-gradient(#ccc 0 25%, #fff 0 50%) 0 0/3px 3px;"></div>
<div style="left:824px;top:492px;width:9px;height:10px;background:#1a1008;"></div>
<div style="left:826px;top:494px;width:5px;height:7px;background:#b07a48;border-radius:40% 10% 10% 60%;"></div>
<div class="t" style="left:843px;top:494.75px;font-size:6.2px;line-height:6.2px;color:#e8e8e8;">Capa 1</div>
<div style="left:818px;top:509px;width:20px;height:12px;background:#ffffff;border:1px solid #2e2e2e;box-sizing:border-box;"></div>
<div class="t" style="left:843px;top:511.75px;font-size:6.2px;line-height:6.2px;color:#e8e8e8;">Capa 0</div>
<div style="left:797px;top:583px;width:175px;height:1px;background:#474747;"></div>
<svg style="left:846.0px;top:588.0px;width:10px;height:8px" viewBox="0 0 10 8"><path d="M4 1.5H2.5a2.5 2.5 0 0 0 0 5H4M6 1.5h1.5a2.5 2.5 0 0 1 0 5H6" fill="none" stroke="#7a7a7a" stroke-width="1"/></svg>
<div class="t" style="left:865px;top:589.23px;font-size:8px;line-height:8px;color:#e6e6e6;font-family:"Liberation Serif",serif;"><i>fx</i></div>
<svg style="left:880.0px;top:587.5px;width:10px;height:9px" viewBox="0 0 10 9"><rect x="0.5" y="0.5" width="9" height="8" fill="#e6e6e6"/><circle cx="5" cy="4.5" r="2.5" fill="#535353"/></svg>
<svg style="left:896.5px;top:587.5px;width:9px;height:9px" viewBox="0 0 9 9"><circle cx="4.5" cy="4.5" r="4" fill="none" stroke="#e6e6e6" stroke-width="1"/><path d="M1.7 7.3L7.3 1.7A4 4 0 0 1 1.7 7.3z" fill="#e6e6e6"/></svg>
<svg style="left:913.0px;top:587.5px;width:10px;height:9px" viewBox="0 0 10 9"><path d="M0.5 1.5h3l1 1.5h5v6h-9z" fill="#e6e6e6"/></svg>
<svg style="left:930.0px;top:587.0px;width:10px;height:10px" viewBox="0 0 10 10"><rect x="0.5" y="0.5" width="9" height="9" fill="none" stroke="#e6e6e6" stroke-width="1"/><path d="M5 2.5v5M2.5 5h5" stroke="#e6e6e6" stroke-width="1"/></svg>
<svg style="left:946.0px;top:586.5px;width:10px;height:11px" viewBox="0 0 10 11"><path d="M1 2h8M3.5 2V0.8h3V2M2 2.5l0.7 7.5h4.6L8 2.5z" fill="none" stroke="#e6e6e6" stroke-width="0.9"/><path d="M4 4v4M6 4v4" stroke="#e6e6e6" stroke-width="0.7"/></svg>
<div style="left:761px;top:598px;width:239px;height:5px;background:#3a3a3a;"></div>
</body></html>
